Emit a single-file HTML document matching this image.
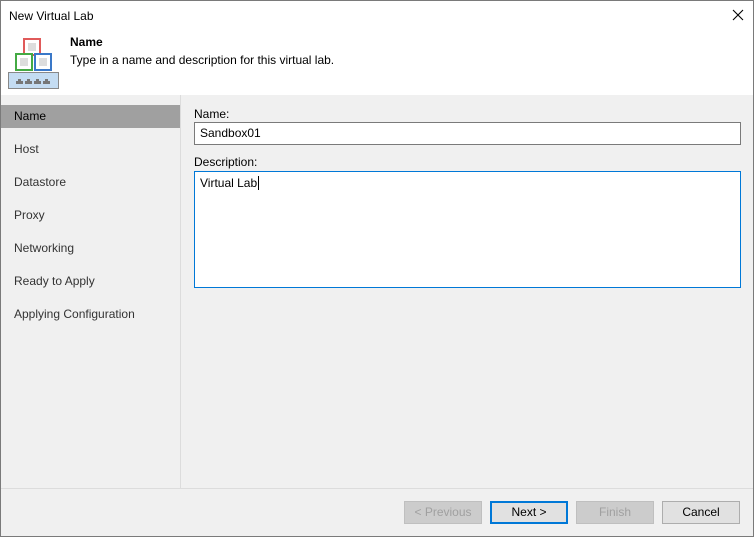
<!DOCTYPE html>
<html><head><style>
*{margin:0;padding:0;box-sizing:border-box}
body{width:754px;height:537px;font-family:"Liberation Sans",sans-serif;font-size:12px;color:#000;background:#f0f0f0;position:relative;overflow:hidden}
.win{position:absolute;left:0;top:0;width:754px;height:537px;border:1px solid #7a7a7a;background:#f0f0f0}
.title{position:absolute;left:0;top:0;width:752px;height:94px;background:#fff}
.t{position:absolute;left:8px;top:8px;font-size:12px}
.h1{position:absolute;left:69px;top:34px;font-weight:bold}
.h2{position:absolute;left:69px;top:52px}
.side{position:absolute;left:0;top:94px;width:180px;height:394px;border-right:1px solid #dcdcdc;background:#f0f0f0}
.item{position:absolute;left:0;width:179px;height:23px;padding-left:13px;line-height:23px;color:#333}
.sel{background:#a0a0a0;color:#000}
.lbl{position:absolute;left:193px}
.inp{position:absolute;left:193px;background:#fff;border:1px solid #7a7a7a;padding-left:5px}
.foot{position:absolute;left:0;top:487px;width:752px;border-top:1px solid #dcdcdc}
.btn{position:absolute;top:500px;width:78px;height:23px;border:1px solid #adadad;background:#e1e1e1;text-align:center;line-height:21px}
.dis{color:#a0a0a0;background:#ccc;border-color:#bfbfbf}
</style></head><body>
<div class="win">
<div class="title">
<div class="t">New Virtual Lab</div>
<svg style="position:absolute;left:731px;top:8px" width="12" height="12"><path d="M1 1L11 11M11 1L1 11" stroke="#000" stroke-width="1.1"/></svg>
<svg style="position:absolute;left:6px;top:36px" width="54" height="54">
<rect x="17" y="2" width="16" height="16" fill="#fff" stroke="#e05a5a" stroke-width="2"/><rect x="21" y="6" width="8" height="8" fill="#ddd"/>
<rect x="9" y="17" width="16" height="16" fill="#fff" stroke="#44aa44" stroke-width="2"/><rect x="13" y="21" width="8" height="8" fill="#ddd"/>
<rect x="28" y="17" width="16" height="16" fill="#fff" stroke="#3a78c8" stroke-width="2"/><rect x="32" y="21" width="8" height="8" fill="#ddd"/>
<rect x="1.5" y="35.5" width="50" height="16" fill="#c4dcf2" stroke="#888"/>
<g fill="#777"><path d="M9 47v-3h2v-2h3v2h2v3z"/><path d="M18 47v-3h2v-2h3v2h2v3z"/><path d="M27 47v-3h2v-2h3v2h2v3z"/><path d="M36 47v-3h2v-2h3v2h2v3z"/></g>
</svg>
<div class="h1">Name</div>
<div class="h2">Type in a name and description for this virtual lab.</div>
</div>
<div class="side">
<div class="item sel" style="top:10px">Name</div>
<div class="item" style="top:43px">Host</div>
<div class="item" style="top:76px">Datastore</div>
<div class="item" style="top:109px">Proxy</div>
<div class="item" style="top:142px">Networking</div>
<div class="item" style="top:175px">Ready to Apply</div>
<div class="item" style="top:208px">Applying Configuration</div>
</div>
<div class="lbl" style="top:106px">Name:</div>
<div class="inp" style="top:121px;width:547px;height:23px;line-height:21px">Sandbox01</div>
<div class="lbl" style="top:154px">Description:</div>
<div class="inp" style="top:170px;width:547px;height:117px;border-color:#0078d7;padding-top:4px">Virtual Lab<span style="border-left:1px solid #000;margin-left:1px"></span></div>
<div class="foot"></div>
<div class="btn dis" style="left:403px">&lt; Previous</div>
<div class="btn" style="left:489px;border:2px solid #0078d7;line-height:19px">Next &gt;</div>
<div class="btn dis" style="left:575px">Finish</div>
<div class="btn" style="left:661px">Cancel</div>
</div>
</body></html>
